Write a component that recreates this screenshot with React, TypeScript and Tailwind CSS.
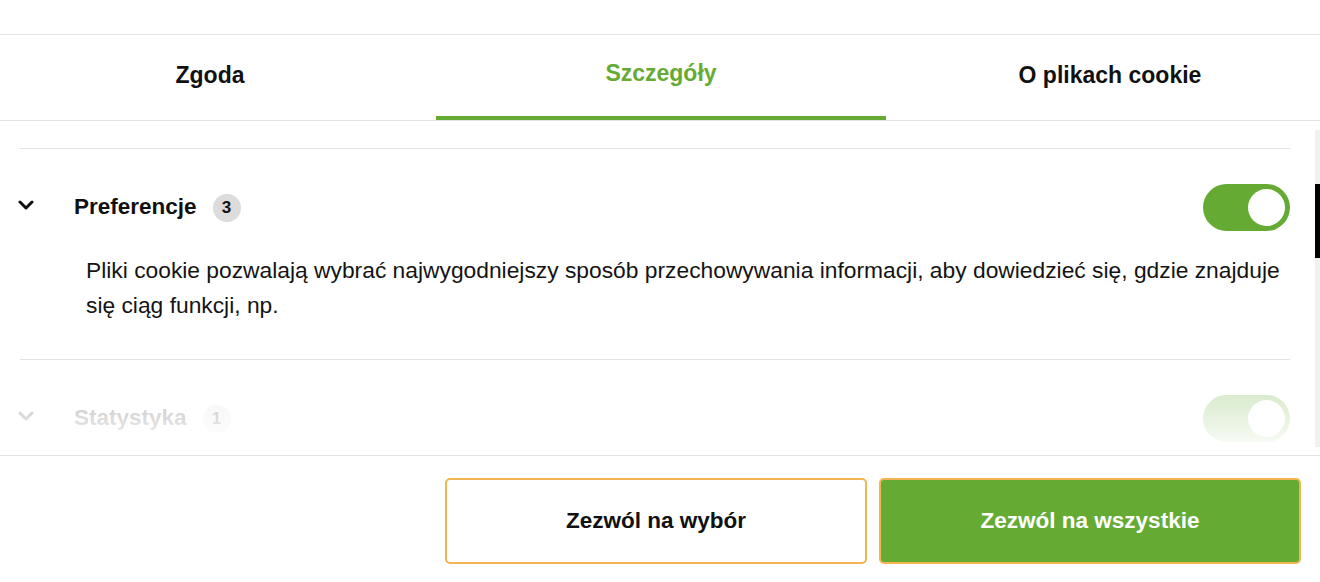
import React from "react";

function Chevron({ color = "#111" }: { color?: string }) {
  return (
    <svg width="16" height="10" viewBox="0 0 16 10" fill="none">
      <polyline points="2,2 8,8 14,2" stroke={color} strokeWidth="3" strokeLinecap="round" strokeLinejoin="round" />
    </svg>
  );
}

function Toggle() {
  return (
    <div className="relative w-[87px] h-[47px] rounded-full bg-[#65ab33] shrink-0">
      <div className="absolute right-[5px] top-[5px] w-[37px] h-[37px] rounded-full bg-white" />
    </div>
  );
}

function Section({ title, count, desc }: { title: string; count: number; desc?: string }) {
  return (
    <div className="border-t border-[#e3e3e3] pt-[35px] pb-[36px]">
      <div className="flex items-center h-[47px]">
        <div className="w-[56px] ml-[-2px] flex items-center pb-[6px]">
          <Chevron />
        </div>
        <span className="text-[22.5px] font-bold text-[#111] leading-none">{title}</span>
        <span className="ml-[16px] w-[28px] h-[28px] rounded-full bg-[#dcdcdc] flex items-center justify-center text-[17px] font-bold text-[#111]">
          {count}
        </span>
        <div className="flex-1" />
        <Toggle />
      </div>
      {desc && (
        <p className="mt-[22px] pl-[66px] mr-[-22px] text-[22.8px] leading-[35px] text-[#141414]">{desc}</p>
      )}
    </div>
  );
}

export default function App() {
  return (
    <div className="w-[1320px] h-[582px] bg-white overflow-hidden flex flex-col" style={{ fontFamily: '"Liberation Sans", Arial, sans-serif' }}>
      <div className="h-[35px] border-b border-[#e3e3e3] shrink-0" />
      <div className="flex h-[86px] border-b border-[#e3e3e3] shrink-0">
        <div className="w-[436px] flex items-center justify-center pr-[16px] pb-[4px] text-[23px] font-bold text-[#111]">Zgoda</div>
        <div className="w-[450px] flex items-center justify-center pb-[4px] text-[23px] font-bold text-[#65ab33] border-b-4 border-[#65ab33]">Szczegóły</div>
        <div className="flex-1 flex items-center justify-center pl-[14px] pb-[4px] text-[23px] font-bold text-[#111]">O plikach cookie</div>
      </div>
      <div className="relative h-[335px] border-b border-[#e3e3e3] overflow-hidden shrink-0">
        <div className="pt-[27px] pl-[20px] pr-[30px]">
          <Section
            title="Preferencje"
            count={3}
            desc="Pliki cookie pozwalają wybrać najwygodniejszy sposób przechowywania informacji, aby dowiedzieć się, gdzie znajduje się ciąg funkcji, np."
          />
          <Section title="Statystyka" count={1} />
        </div>
        <div className="absolute left-0 right-0 top-[241px] bottom-0 bg-gradient-to-b from-[rgba(255,255,255,0.62)] to-white" />
        <div className="absolute right-0 top-[9px] w-[5px] h-[317px] bg-[#f1f1f1]">
          <div className="mt-[54px] h-[74px] w-full bg-black" />
        </div>
      </div>
      <div className="flex justify-end gap-[12px] pr-[19px] pt-[22px]">
        <button className="w-[422px] h-[86px] rounded-[5px] border-2 border-[#f2b552] bg-white text-[22.5px] font-bold text-[#111]">
          Zezwól na wybór
        </button>
        <button className="w-[422px] h-[86px] rounded-[5px] border-2 border-[#f2b552] bg-[#65ab33] text-[22.5px] font-bold text-white">
          Zezwól na wszystkie
        </button>
      </div>
    </div>
  );
}
